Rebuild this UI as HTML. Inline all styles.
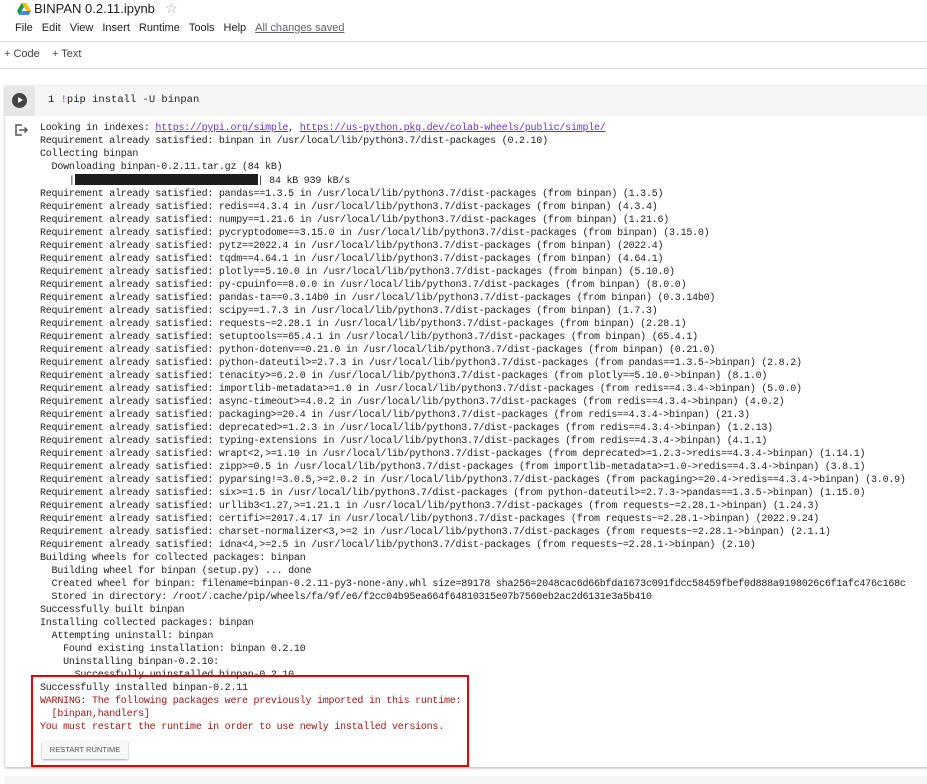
<!DOCTYPE html>
<html><head><meta charset="utf-8"><style>
body{margin:0;width:927px;height:784px;overflow:hidden;background:#fff;font-family:"Liberation Sans",sans-serif;position:relative}
.title{position:absolute;left:34px;top:1px;font-size:13px;color:#202124}
.star{position:absolute;left:165px;top:0px;font-size:14px;color:#aaa}
.menu{position:absolute;left:15px;top:22px;font-size:11px;color:#202124}
.menu span{margin-right:9px}
.menu u{color:#5f6368}
.hr1{position:absolute;left:0;right:0;top:41px;border-top:1px solid #dadada}
.tb{position:absolute;left:4px;top:48px;font-size:11px;color:#444}
.hr2{position:absolute;left:0;right:0;top:68px;border-top:1px solid #dadada}
.cell{position:absolute;left:5px;top:86px;width:940px;height:681px;box-shadow:0 1px 3px rgba(0,0,0,.3);background:#fff}
.inp{position:absolute;left:0;top:0;right:0;height:30px;background:#f6f6f6}
.runb{position:absolute;left:0;top:0;width:30px;height:30px;background:#e6e6e6}
.runb div{position:absolute;left:7px;top:7px;width:15px;height:15px;border-radius:50%;background:#444}
.runb div:after{content:"";position:absolute;left:6px;top:4px;border-left:5px solid #fff;border-top:3.5px solid transparent;border-bottom:3.5px solid transparent}
.code{position:absolute;left:43px;top:8px;font:10.5px/13px "Liberation Mono",monospace;color:#222}
.out{position:absolute;left:35px;top:36px;font:10px/13px "Liberation Mono",monospace;letter-spacing:-0.23px;color:#222;white-space:pre;margin:0}
.out a{color:#6b2fd6;text-decoration:underline}
.red{color:#a31515}
.bar{display:inline-block;width:183px;height:11px;background:#1d1d1d;vertical-align:-2px}
.box{position:absolute;left:31px;top:675px;width:434px;height:88px;border:2px solid #e00}
.btn{position:absolute;left:42px;top:741px;width:86px;height:18px;background:#f7f7f7;box-shadow:0 1px 2px rgba(0,0,0,.35);font-size:7.5px;color:#555;text-align:center;line-height:18px}
.bot{position:absolute;left:5px;right:0;top:776px;height:8px;background:#f5f5f5}
</style></head><body>
<svg style="position:absolute;left:17px;top:3px" width="14" height="12" viewBox="0 0 14 12"><polygon points="4.7,0 9.3,0 14,8 11.7,12" fill="#fbbc04"/><polygon points="4.7,0 0,8 2.3,12 7,4" fill="#0f9d58"/><polygon points="2.3,12 11.7,12 14,8 4.6,8" fill="#4285f4"/></svg>
<div class="title">BINPAN 0.2.11.ipynb</div>
<div class="star">☆</div>
<div class="menu"><span>File</span><span>Edit</span><span>View</span><span>Insert</span><span>Runtime</span><span>Tools</span><span>Help</span><u>All changes saved</u></div>
<div class="hr1"></div>
<div class="tb">+ Code &nbsp;&nbsp; + Text</div>
<div class="hr2"></div>
<div class="cell">
<div class="inp"></div>
<div class="runb"><div></div></div>
<div class="code">1 <span style="color:#a020f0">!</span>pip install -U binpan</div>
<pre class="out">Looking in indexes: <a>https://pypi.org/simple</a>, <a>https://us-python.pkg.dev/colab-wheels/public/simple/</a>
Requirement already satisfied: binpan in /usr/local/lib/python3.7/dist-packages (0.2.10)
Collecting binpan
  Downloading binpan-0.2.11.tar.gz (84 kB)
     |<span class="bar"></span>| 84 kB 939 kB/s
Requirement already satisfied: pandas==1.3.5 in /usr/local/lib/python3.7/dist-packages (from binpan) (1.3.5)
Requirement already satisfied: redis==4.3.4 in /usr/local/lib/python3.7/dist-packages (from binpan) (4.3.4)
Requirement already satisfied: numpy==1.21.6 in /usr/local/lib/python3.7/dist-packages (from binpan) (1.21.6)
Requirement already satisfied: pycryptodome==3.15.0 in /usr/local/lib/python3.7/dist-packages (from binpan) (3.15.0)
Requirement already satisfied: pytz==2022.4 in /usr/local/lib/python3.7/dist-packages (from binpan) (2022.4)
Requirement already satisfied: tqdm==4.64.1 in /usr/local/lib/python3.7/dist-packages (from binpan) (4.64.1)
Requirement already satisfied: plotly==5.10.0 in /usr/local/lib/python3.7/dist-packages (from binpan) (5.10.0)
Requirement already satisfied: py-cpuinfo==8.0.0 in /usr/local/lib/python3.7/dist-packages (from binpan) (8.0.0)
Requirement already satisfied: pandas-ta==0.3.14b0 in /usr/local/lib/python3.7/dist-packages (from binpan) (0.3.14b0)
Requirement already satisfied: scipy==1.7.3 in /usr/local/lib/python3.7/dist-packages (from binpan) (1.7.3)
Requirement already satisfied: requests~=2.28.1 in /usr/local/lib/python3.7/dist-packages (from binpan) (2.28.1)
Requirement already satisfied: setuptools==65.4.1 in /usr/local/lib/python3.7/dist-packages (from binpan) (65.4.1)
Requirement already satisfied: python-dotenv==0.21.0 in /usr/local/lib/python3.7/dist-packages (from binpan) (0.21.0)
Requirement already satisfied: python-dateutil>=2.7.3 in /usr/local/lib/python3.7/dist-packages (from pandas==1.3.5->binpan) (2.8.2)
Requirement already satisfied: tenacity>=6.2.0 in /usr/local/lib/python3.7/dist-packages (from plotly==5.10.0->binpan) (8.1.0)
Requirement already satisfied: importlib-metadata>=1.0 in /usr/local/lib/python3.7/dist-packages (from redis==4.3.4->binpan) (5.0.0)
Requirement already satisfied: async-timeout>=4.0.2 in /usr/local/lib/python3.7/dist-packages (from redis==4.3.4->binpan) (4.0.2)
Requirement already satisfied: packaging>=20.4 in /usr/local/lib/python3.7/dist-packages (from redis==4.3.4->binpan) (21.3)
Requirement already satisfied: deprecated>=1.2.3 in /usr/local/lib/python3.7/dist-packages (from redis==4.3.4->binpan) (1.2.13)
Requirement already satisfied: typing-extensions in /usr/local/lib/python3.7/dist-packages (from redis==4.3.4->binpan) (4.1.1)
Requirement already satisfied: wrapt&lt;2,&gt;=1.10 in /usr/local/lib/python3.7/dist-packages (from deprecated&gt;=1.2.3-&gt;redis==4.3.4-&gt;binpan) (1.14.1)
Requirement already satisfied: zipp&gt;=0.5 in /usr/local/lib/python3.7/dist-packages (from importlib-metadata&gt;=1.0-&gt;redis==4.3.4-&gt;binpan) (3.8.1)
Requirement already satisfied: pyparsing!=3.0.5,&gt;=2.0.2 in /usr/local/lib/python3.7/dist-packages (from packaging&gt;=20.4-&gt;redis==4.3.4-&gt;binpan) (3.0.9)
Requirement already satisfied: six&gt;=1.5 in /usr/local/lib/python3.7/dist-packages (from python-dateutil&gt;=2.7.3-&gt;pandas==1.3.5-&gt;binpan) (1.15.0)
Requirement already satisfied: urllib3&lt;1.27,&gt;=1.21.1 in /usr/local/lib/python3.7/dist-packages (from requests~=2.28.1-&gt;binpan) (1.24.3)
Requirement already satisfied: certifi&gt;=2017.4.17 in /usr/local/lib/python3.7/dist-packages (from requests~=2.28.1-&gt;binpan) (2022.9.24)
Requirement already satisfied: charset-normalizer&lt;3,&gt;=2 in /usr/local/lib/python3.7/dist-packages (from requests~=2.28.1-&gt;binpan) (2.1.1)
Requirement already satisfied: idna&lt;4,&gt;=2.5 in /usr/local/lib/python3.7/dist-packages (from requests~=2.28.1-&gt;binpan) (2.10)
Building wheels for collected packages: binpan
  Building wheel for binpan (setup.py) ... done
  Created wheel for binpan: filename=binpan-0.2.11-py3-none-any.whl size=89178 sha256=2048cac6d66bfda1673c091fdcc58459fbef0d888a9198026c6f1afc476c168c
  Stored in directory: /root/.cache/pip/wheels/fa/9f/e6/f2cc04b95ea664f64810315e07b7560eb2ac2d6131e3a5b410
Successfully built binpan
Installing collected packages: binpan
  Attempting uninstall: binpan
    Found existing installation: binpan 0.2.10
    Uninstalling binpan-0.2.10:
      Successfully uninstalled binpan-0.2.10
Successfully installed binpan-0.2.11
<span class="red">WARNING: The following packages were previously imported in this runtime:
  [binpan,handlers]
You must restart the runtime in order to use newly installed versions.</span></pre>
</div>
<svg style="position:absolute;left:15px;top:124px" width="14" height="12" viewBox="0 0 14 12" fill="none" stroke="#555" stroke-width="1.5"><path d="M7 1H1V11H7"/><path d="M4 6H12M9.5 3.5L12 6L9.5 8.5"/></svg>
<div class="box"></div>
<div class="btn">RESTART RUNTIME</div>
<div class="bot"></div>
</body></html>
